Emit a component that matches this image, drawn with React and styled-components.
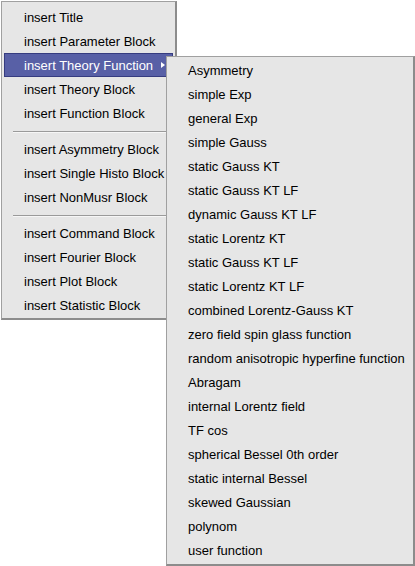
import React from "react";
import styled, { createGlobalStyle } from "styled-components";

const GlobalStyle = createGlobalStyle`
  html, body {
    margin: 0;
    padding: 0;
    background: #ffffff;
    font-family: "Liberation Sans", Arial, sans-serif;
  }
`;

const mainGroups = [
  ["insert Title", "insert Parameter Block", "insert Theory Function", "insert Theory Block", "insert Function Block"],
  ["insert Asymmetry Block", "insert Single Histo Block", "insert NonMusr Block"],
  ["insert Command Block", "insert Fourier Block", "insert Plot Block", "insert Statistic Block"],
];

const theoryItems = [
  "Asymmetry",
  "simple Exp",
  "general Exp",
  "simple Gauss",
  "static Gauss KT",
  "static Gauss KT LF",
  "dynamic Gauss KT LF",
  "static Lorentz KT",
  "static Gauss KT LF",
  "static Lorentz KT LF",
  "combined Lorentz-Gauss KT",
  "zero field spin glass function",
  "random anisotropic hyperfine function",
  "Abragam",
  "internal Lorentz field",
  "TF cos",
  "spherical Bessel 0th order",
  "static internal Bessel",
  "skewed Gaussian",
  "polynom",
  "user function",
];

const App = () => {
  return (
    <Page>
      <GlobalStyle />
      <Menu>
        {mainGroups.map((group, gi) => (
          <React.Fragment key={gi}>
            {gi > 0 && <Separator />}
            {group.map((label) => {
              const active = label === "insert Theory Function";
              return (
                <Item key={label} active={active}>
                  {label}
                  {active && <Arrow />}
                </Item>
              );
            })}
          </React.Fragment>
        ))}
      </Menu>

      <SubMenu>
        {theoryItems.map((label, i) => (
          <SubItem key={i}>{label}</SubItem>
        ))}
      </SubMenu>
    </Page>
  );
};

export default App;

const Page = styled.div`
  position: relative;
  width: 415px;
  height: 566px;
  padding: 1px 0 0 1px;
  box-sizing: border-box;
`;

const Menu = styled.div`
  width: 176px;
  box-sizing: border-box;
  background: #e6e6e6;
  border-top: 1px solid #a0a0a0;
  border-left: 1px solid #a0a0a0;
  border-right: 2px solid #8c8c8c;
  border-bottom: 2px solid #8c8c8c;
  padding: 3px 2px 1px 2px;
  display: flex;
  flex-direction: column;
`;

const Item = styled.div`
  position: relative;
  height: 24px;
  box-sizing: border-box;
  padding-left: 19px;
  font-size: 13px;
  color: ${(p) => (p.active ? "#ffffff" : "#000000")};
  background: ${(p) => (p.active ? "#5860a6" : "transparent")};
  border: 1px solid ${(p) => (p.active ? "#363c80" : "transparent")};
  line-height: 23px;
  white-space: nowrap;
`;

const Arrow = styled.span`
  position: absolute;
  right: 7px;
  top: 8px;
  width: 0;
  height: 0;
  border-top: 3px solid transparent;
  border-bottom: 3px solid transparent;
  border-left: 4px solid #ffffff;
`;

const Separator = styled.div`
  height: 12px;
  display: flex;
  align-items: center;
  padding: 0 0 0 9px;
  &::before {
    content: "";
    flex: 1;
    height: 1px;
    background: #9a9a9a;
    box-shadow: 0 1px 0 #f6f6f6;
  }
`;

const SubMenu = styled.div`
  position: absolute;
  left: 166px;
  top: 56px;
  width: 249px;
  height: 510px;
  box-sizing: border-box;
  background: #e6e6e6;
  border-top: 1px solid #a0a0a0;
  border-left: 1px solid #a0a0a0;
  border-right: 2px solid #8c8c8c;
  border-bottom: 2px solid #8c8c8c;
  padding: 2px 2px 0 2px;
  display: flex;
  flex-direction: column;
`;

const SubItem = styled.div`
  height: 24px;
  line-height: 24px;
  padding-left: 19px;
  font-size: 13px;
  color: #000000;
  white-space: nowrap;
`;
